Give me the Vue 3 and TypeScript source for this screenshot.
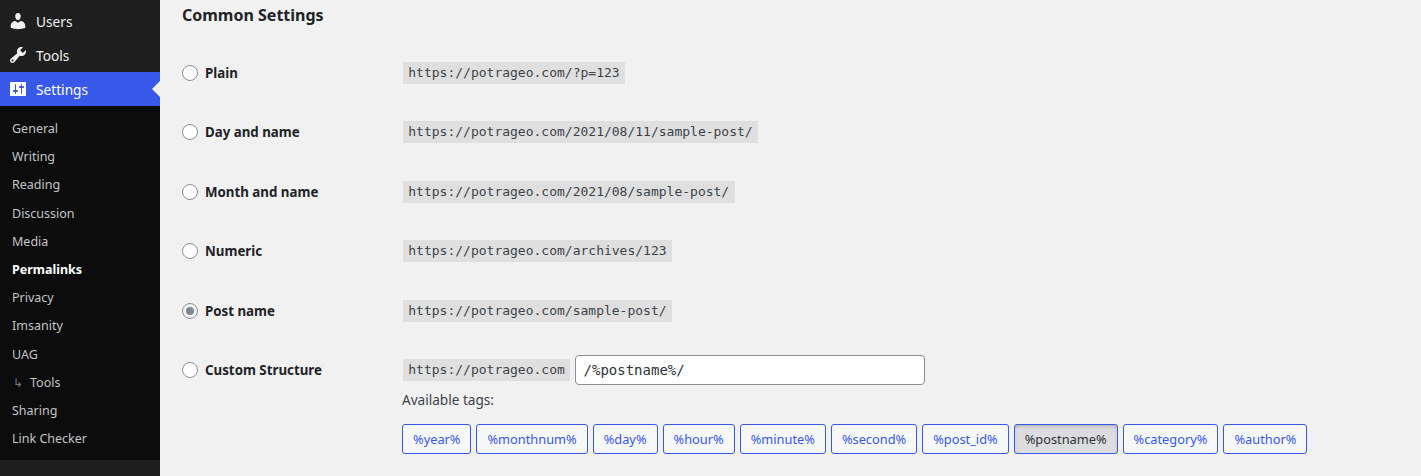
<template>
  <div class="page">
    <aside class="sidebar">
      <a class="menu-item">
        <svg class="menu-icon" viewBox="0 0 20 20"><path d="M10 9.250c-2.270 0-2.730-3.440-2.730-3.440C7 4.020 7.820 2 9.970 2c2.160 0 2.980 2.020 2.710 3.810 0 0-.41 3.440-2.680 3.440zm0 2.570L12.720 10c2.390 0 4.520 2.330 4.520 4.530v2.490s-3.650 1.130-7.240 1.130c-3.650 0-7.240-1.130-7.240-1.130v-2.490c0-2.250 1.940-4.480 4.470-4.480z" fill="currentColor"/></svg>
        <span>Users</span>
      </a>
      <a class="menu-item">
        <svg class="menu-icon" viewBox="0 0 20 20"><path d="M16.680 9.770c-1.340 1.340-3.300 1.670-4.950.99l-5.410 6.520c-.99.99-2.590.99-3.570 0-.99-.98-.99-2.580 0-3.570l6.520-5.420c-.68-1.650-.35-3.610.99-4.950 1.280-1.280 3.120-1.620 4.720-1.060l-2.890 2.890 2.820 2.820 2.860-2.870c.53 1.580.18 3.390-1.090 4.670zM3.810 16.210c.4.390 1.040.39 1.430 0 .4-.4.4-1.040 0-1.430-.39-.4-1.030-.4-1.430 0-.39.39-.39 1.030 0 1.430z" fill="currentColor"/></svg>
        <span>Tools</span>
      </a>
      <a class="menu-item active">
        <svg class="menu-icon" viewBox="0 0 20 20"><path d="M18 16V4c0-.55-.45-1-1-1H3c-.55 0-1 .45-1 1v12c0 .55.45 1 1 1h14c.55 0 1-.45 1-1zM8 11h1c.55 0 1 .45 1 1s-.45 1-1 1H8v1.500c0 .28-.22.5-.5.5s-.5-.22-.5-.5V13H6c-.55 0-1-.45-1-1s.45-1 1-1h1V5.500c0-.28.22-.5.5-.5s.5.22.5.5V11zm5-2h-1c-.55 0-1-.45-1-1s.45-1 1-1h1V5.500c0-.28.22-.5.5-.5s.5.22.5.5V7h1c.55 0 1 .45 1 1s-.45 1-1 1h-1v5.500c0 .28-.22.5-.5.5s-.5-.22-.5-.5V9z" fill="currentColor"/></svg>
        <span>Settings</span>
      </a>
      <ul class="submenu">
        <li v-for="item in submenu" :key="item.label" :class="{ current: item.current }">
          <span v-if="item.child" class="child-arrow">↳</span>{{ item.label }}
        </li>
      </ul>
    </aside>

    <main class="content">
      <h2 class="heading">Common Settings</h2>
      <div class="rows">
        <div v-for="row in rows" :key="row.label" class="row">
          <label class="option">
            <span class="radio" :class="{ checked: row.checked }"></span>
            {{ row.label }}
          </label>
          <code>{{ row.url }}</code>
        </div>
        <div class="row custom">
          <label class="option">
            <span class="radio"></span>
            Custom Structure
          </label>
          <code>https://potrageo.com</code>
          <input class="structure" type="text" value="/%postname%/" />
        </div>
      </div>
      <div class="tags-wrap">
        <p class="tags-title">Available tags:</p>
        <div class="tags">
          <button v-for="tag in tags" :key="tag" class="tag" :class="{ selected: tag === '%postname%' }">{{ tag }}</button>
        </div>
      </div>
    </main>
  </div>
</template>

<script setup lang="ts">
interface SubItem {
  label: string
  current?: boolean
  child?: boolean
}

const submenu: SubItem[] = [
  { label: 'General' },
  { label: 'Writing' },
  { label: 'Reading' },
  { label: 'Discussion' },
  { label: 'Media' },
  { label: 'Permalinks', current: true },
  { label: 'Privacy' },
  { label: 'Imsanity' },
  { label: 'UAG' },
  { label: 'Tools', child: true },
  { label: 'Sharing' },
  { label: 'Link Checker' },
]

const rows = [
  { label: 'Plain', url: 'https://potrageo.com/?p=123' },
  { label: 'Day and name', url: 'https://potrageo.com/2021/08/11/sample-post/' },
  { label: 'Month and name', url: 'https://potrageo.com/2021/08/sample-post/' },
  { label: 'Numeric', url: 'https://potrageo.com/archives/123' },
  { label: 'Post name', url: 'https://potrageo.com/sample-post/', checked: true },
]

const tags = ['%year%', '%monthnum%', '%day%', '%hour%', '%minute%', '%second%', '%post_id%', '%postname%', '%category%', '%author%']
</script>

<style>
html,
body {
  margin: 0;
  background: #f1f1f1;
}
</style>

<style scoped>
.page {
  display: flex;
  height: 476px;
  overflow: hidden;
  font-family: "Noto Sans", "Open Sans", sans-serif;
  color: #1d2327;
  background: #f1f1f1;
}

.sidebar {
  width: 160px;
  flex: none;
  padding-top: 4px;
  background: #1e1e1e;
  box-sizing: border-box;
}

.menu-item {
  position: relative;
  display: flex;
  align-items: center;
  gap: 8px;
  height: 34px;
  padding-left: 8px;
  font-size: 13.700px;
  color: #f0f0f1;
}

.menu-icon {
  width: 20px;
  height: 20px;
  flex: none;
}

.menu-item.active {
  background: #3858e9;
  color: #fff;
}

.menu-item.active::after {
  content: "";
  position: absolute;
  right: 0;
  top: 9px;
  border: 8px solid transparent;
  border-right-color: #f1f1f1;
  border-left-width: 0;
}

.submenu {
  margin: 0;
  padding: 9px 0 7px;
  list-style: none;
  background: #0c0c0c;
}

.submenu li {
  height: 28.200px;
  line-height: 28px;
  padding-left: 12px;
  font-size: 12.500px;
  color: #c3c4c7;
  white-space: nowrap;
}

.submenu li.current {
  font-weight: 700;
  color: #fff;
}

.child-arrow {
  display: inline-block;
  width: 18px;
  padding-left: 1px;
  box-sizing: border-box;
  font-size: 12px;
  color: #787c82;
}

.content {
  flex: 1;
  padding-left: 22px;
}

.heading {
  margin: 4px 0 0;
  font-size: 16px;
  line-height: 22px;
  font-weight: 700;
}

.rows {
  display: flex;
  flex-direction: column;
  gap: 27.400px;
  margin-top: 31px;
}

.row {
  display: flex;
  align-items: center;
  height: 32px;
}

.option {
  display: flex;
  align-items: center;
  gap: 7px;
  width: 221px;
  flex: none;
  font-size: 13.300px;
  font-weight: 700;
}

.radio {
  width: 16px;
  height: 16px;
  flex: none;
  box-sizing: border-box;
  border: 1px solid #8c8f94;
  border-radius: 50%;
  background: #fff;
  display: flex;
  align-items: center;
  justify-content: center;
}

.radio.checked {
  background: #f1f1f1;
}

.radio.checked::before {
  content: "";
  width: 8px;
  height: 8px;
  border-radius: 50%;
  background: #7e8993;
}

code {
  height: 22px;
  line-height: 22px;
  padding: 0 5.300px;
  font-family: "DejaVu Sans Mono", monospace;
  font-size: 13px;
  color: #3c434a;
  background: #dfdfdf;
  white-space: nowrap;
}

.structure {
  width: 350px;
  height: 30px;
  box-sizing: border-box;
  margin-left: 4.400px;
  padding: 0 8px;
  border: 1px solid #8c8f94;
  border-radius: 4px;
  background: #fff;
  font-family: "DejaVu Sans Mono", monospace;
  font-size: 14px;
  color: #2c3338;
}

.tags-wrap {
  margin-left: 220px;
}

.tags-title {
  margin: 4px 0 0;
  font-size: 13.600px;
  line-height: 20px;
  color: #3c434a;
}

.tags {
  display: flex;
  gap: 5px;
  margin-top: 14px;
}

.tag {
  height: 30px;
  padding: 0 10px;
  border: 1px solid #3858e9;
  border-radius: 3px;
  background: #f6f7f7;
  font-family: "Noto Sans", "Open Sans", sans-serif;
  font-size: 12.800px;
  color: #3858e9;
  white-space: nowrap;
}

.tag.selected {
  background: #dcdcde;
  color: #2c3338;
  box-shadow: inset 0 2px 5px -3px rgba(0, 0, 0, 0.5);
}
</style>
